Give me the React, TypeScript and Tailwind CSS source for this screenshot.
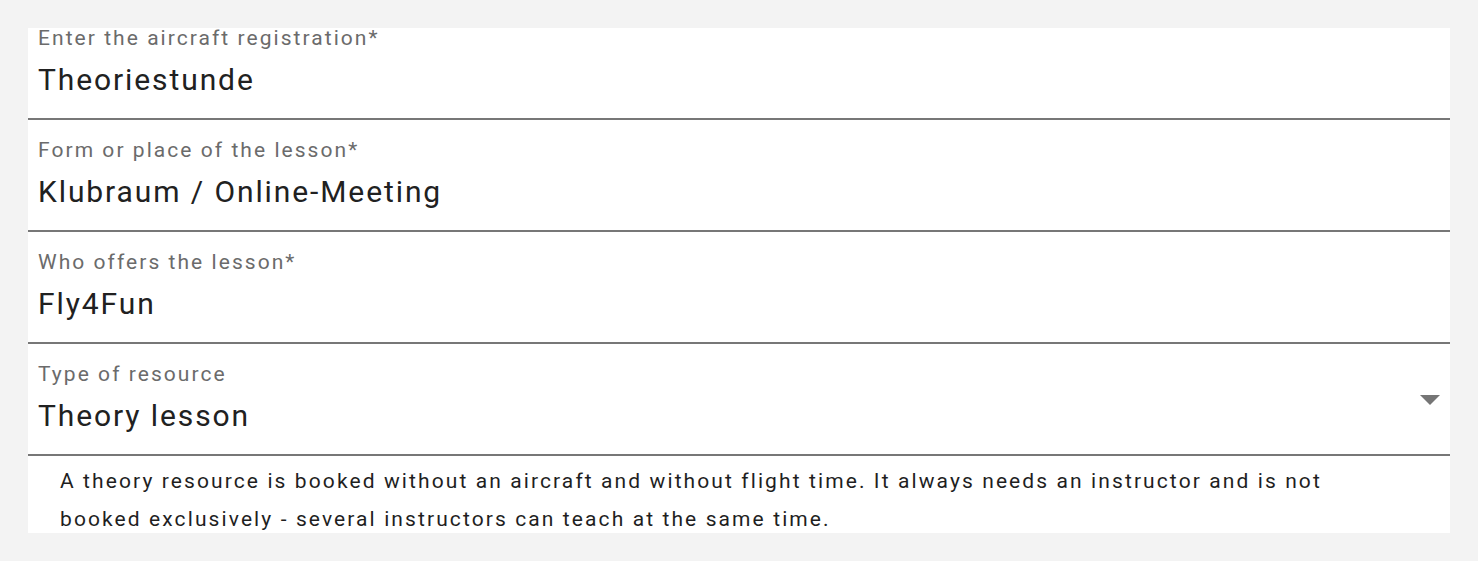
import React from 'react';

type Field = {
  label: string;
  value: string;
  select?: boolean;
};

const fields: Field[] = [
  { label: 'Enter the aircraft registration*', value: 'Theoriestunde' },
  { label: 'Form or place of the lesson*', value: 'Klubraum / Online-Meeting' },
  { label: 'Who offers the lesson*', value: 'Fly4Fun' },
  { label: 'Type of resource', value: 'Theory lesson', select: true },
];

function FilledField({ field }: { field: Field }) {
  return (
    <div className="relative h-[112px] border-b-2 border-[#777777] pl-[10px] pr-[10px] pt-[18px]">
      <div className="text-[21px] leading-[24px] tracking-[2.05px] text-[#6b6b6b]">{field.label}</div>
      <div className="mt-[13px] text-[30px] leading-[34px] tracking-[1.9px] text-[#212121]">{field.value}</div>
      {field.select && (
        <svg
          className="absolute right-[10px] top-[51px]"
          width="20"
          height="10"
          viewBox="0 0 20 10"
        >
          <path d="M0 0h20L10 10z" fill="#757575" />
        </svg>
      )}
    </div>
  );
}

export default function App() {
  return (
    <div
      className="min-h-[561px] bg-[#f3f3f3] px-[28px] pt-[28px]"
      style={{ fontFamily: 'Roboto, "Noto Sans", sans-serif' }}
    >
      <div className="h-[505px] overflow-hidden bg-white">
        <div className="-mt-[20px]">
          {fields.map(f => (
            <FilledField key={f.label} field={f} />
          ))}
          <p className="max-w-[1340px] pl-[32px] pt-[6px] text-[21px] leading-[38px] tracking-[2.1px] text-[#1f1f1f]">
            A theory resource is booked without an aircraft and without flight time. It always needs an instructor and is not booked exclusively - several instructors can teach at the same time.
          </p>
        </div>
      </div>
    </div>
  );
}
